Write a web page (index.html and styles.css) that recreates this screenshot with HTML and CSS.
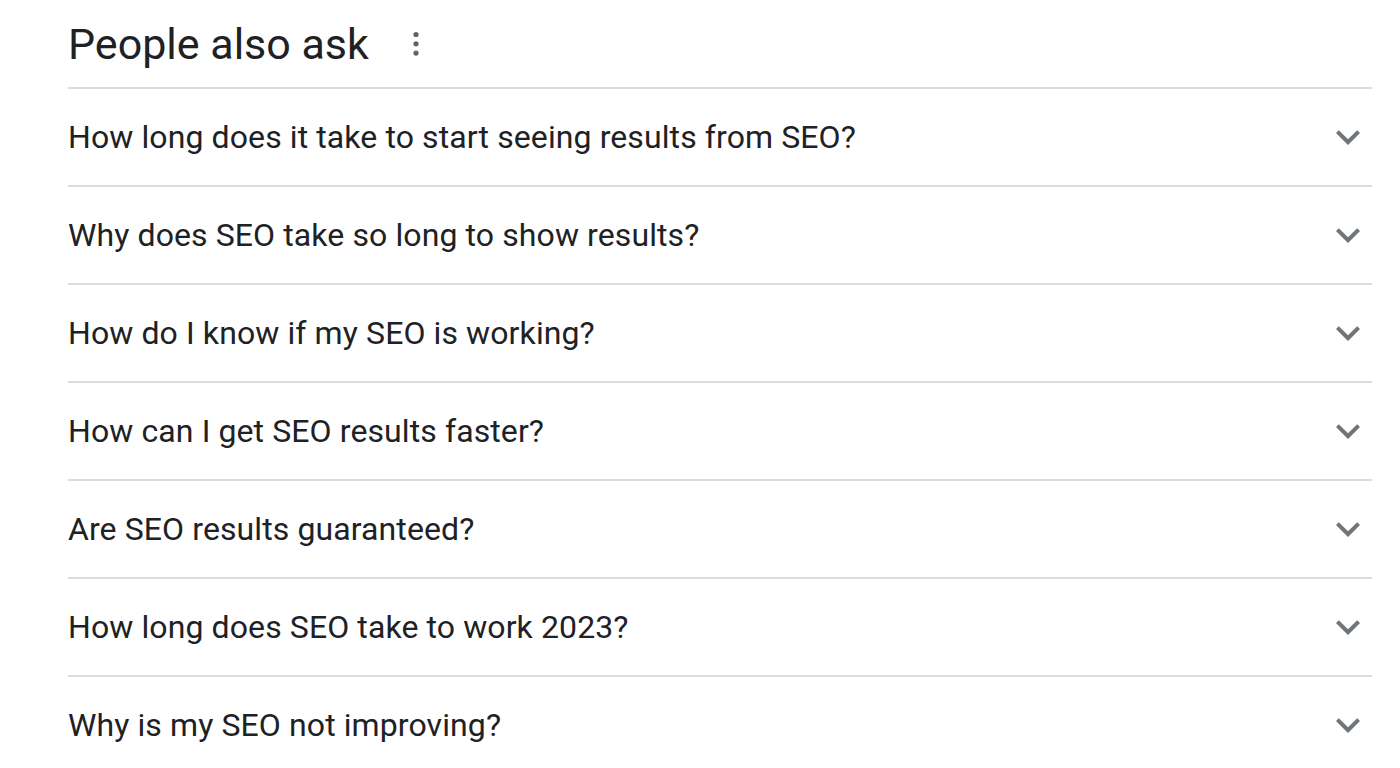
FILE: index.html
```html
<!DOCTYPE html>
<html>
<head>
<meta charset="utf-8">
<link rel="stylesheet" href="styles.css">
</head>
<body>
<div class="paa">
  <div class="paa-header">
    <h2 class="paa-title">People also ask</h2>
    <svg class="more" width="12" height="30" viewBox="0 0 12 30"><circle cx="6" cy="5.5" r="2.6"/><circle cx="6" cy="14.8" r="2.6"/><circle cx="6" cy="24.1" r="2.6"/></svg>
  </div>
  <div class="q"><span>How long does it take to start seeing results from SEO?</span><svg class="chev" viewBox="0 0 24 24"><path d="M16.59 8.59L12 13.17 7.41 8.59 6 10l6 6 6-6z"/></svg></div>
  <div class="q"><span>Why does SEO take so long to show results?</span><svg class="chev" viewBox="0 0 24 24"><path d="M16.59 8.59L12 13.17 7.41 8.59 6 10l6 6 6-6z"/></svg></div>
  <div class="q"><span>How do I know if my SEO is working?</span><svg class="chev" viewBox="0 0 24 24"><path d="M16.59 8.59L12 13.17 7.41 8.59 6 10l6 6 6-6z"/></svg></div>
  <div class="q"><span>How can I get SEO results faster?</span><svg class="chev" viewBox="0 0 24 24"><path d="M16.59 8.59L12 13.17 7.41 8.59 6 10l6 6 6-6z"/></svg></div>
  <div class="q"><span>Are SEO results guaranteed?</span><svg class="chev" viewBox="0 0 24 24"><path d="M16.59 8.59L12 13.17 7.41 8.59 6 10l6 6 6-6z"/></svg></div>
  <div class="q"><span>How long does SEO take to work 2023?</span><svg class="chev" viewBox="0 0 24 24"><path d="M16.59 8.59L12 13.17 7.41 8.59 6 10l6 6 6-6z"/></svg></div>
  <div class="q"><span>Why is my SEO not improving?</span><svg class="chev" viewBox="0 0 24 24"><path d="M16.59 8.59L12 13.17 7.41 8.59 6 10l6 6 6-6z"/></svg></div>
</div>
</body>
</html>
```
FILE: styles.css
```css
html, body {
  margin: 0;
  padding: 0;
  background: #fff;
}
body {
  font-family: Roboto, "Open Sans", sans-serif;
  color: #202124;
  overflow: hidden;
}
.paa {
  margin-left: 68px;
  width: 1304px;
}
.paa-header {
  display: flex;
  align-items: center;
  height: 87px;
  border-bottom: 2px solid #dadce0;
}
.paa-title {
  margin: 0;
  font-size: 43px;
  font-weight: 400;
  line-height: 52px;
}
.more {
  margin-left: 41px;
  fill: #5f6368;
}
.q {
  display: flex;
  align-items: center;
  justify-content: space-between;
  height: 96px;
  border-bottom: 2px solid #dadce0;
  font-size: 32px;
  letter-spacing: 0.1px;
}
.q:last-child {
  border-bottom: none;
}
.chev {
  width: 48px;
  height: 48px;
  fill: #70757a;
}
```
